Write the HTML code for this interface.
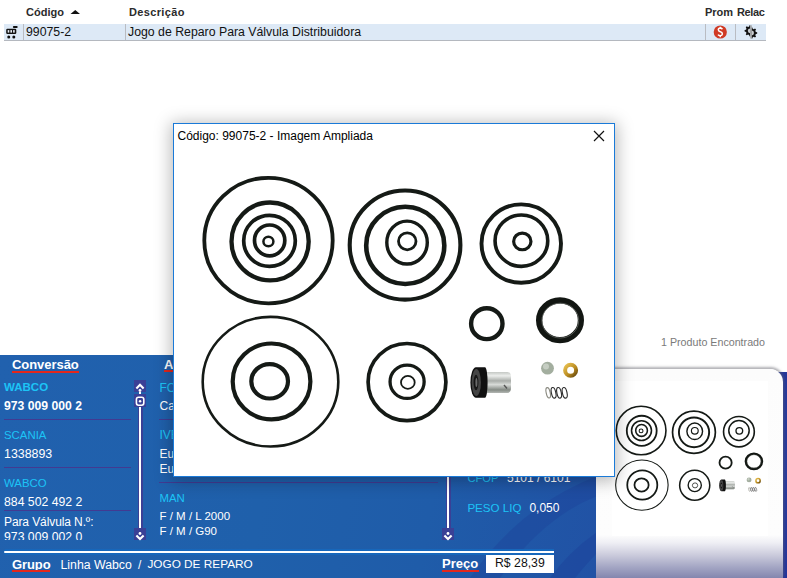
<!DOCTYPE html>
<html><head><meta charset="utf-8">
<style>
*{margin:0;padding:0;box-sizing:border-box}
html,body{width:787px;height:578px;overflow:hidden;background:#fff;font-family:"Liberation Sans",sans-serif;position:relative}
.a{position:absolute;white-space:nowrap}
.row{left:4px;top:24px;width:762px;height:17px;background:#dde9f6;border-bottom:1px solid #b4b8bf}
.vd{width:1px;background:#b9bcc2}
#panel{left:0;top:355px;width:596px;height:223px;background:linear-gradient(100deg,#2161ae 0%,#1f60ab 45%,#1f5ca9 72%,#2152a5 100%);overflow:hidden}
.ul{height:2px;background:#e3271c}
.sep{height:1px;background:#423a92}
.sb{width:12px;height:12px;background:#3a4096}
.trk{width:5px;background:#3a4096}
.trk i{position:absolute;left:1.2px;top:0;bottom:0;width:2.6px;background:#fff}
#dlg{left:173px;top:123px;width:442px;height:354px;background:#fff;border:1px solid #1a7ad8;box-shadow:0 2px 16px 2px rgba(0,0,0,0.28)}
#card{left:596px;top:369px;width:187px;height:209px;border-top-right-radius:13px;box-shadow:0 -1.5px 2.5px 0.5px rgba(100,100,110,.5);background:linear-gradient(180deg,#fcfcfc 0px,#fdfdfd 166px,#eeeef4 174px,#cbcbdc 186px,#a4a6c4 198px,#8486ae 209px)}

</style></head><body>
<div class="a" style="left:26px;top:6.69px;font-size:11px;line-height:11px;font-weight:bold;color:#2b2b2b;">Código</div>
<svg class="a" style="left:70px;top:9px" width="11" height="6"><path d="M0.5 5 L5.25 1 L10 5Z" fill="#111"/></svg>
<div class="a" style="left:129px;top:6.69px;font-size:11px;line-height:11px;font-weight:bold;color:#2b2b2b;letter-spacing:0.35px">Descrição</div>
<div class="a" style="left:705px;top:6.69px;font-size:11px;line-height:11px;font-weight:bold;color:#2b2b2b;">Prom</div>
<div class="a" style="left:737px;top:6.69px;font-size:11px;line-height:11px;font-weight:bold;color:#2b2b2b;letter-spacing:-0.35px">Relac</div>
<div class="a row"></div>
<div class="a vd" style="left:23px;top:24px;height:16px"></div>
<div class="a vd" style="left:125px;top:24px;height:16px"></div>
<div class="a vd" style="left:705px;top:24px;height:16px"></div>
<div class="a vd" style="left:735px;top:24px;height:16px"></div>
<svg class="a" style="left:4px;top:24px" width="19" height="16"><rect x="8.9" y="1.9" width="4.8" height="2" rx="1" fill="#111"/><rect x="2.2" y="4.8" width="10.1" height="5.1" rx="1.2" fill="#111"/><rect x="3.7" y="6.1" width="1.6" height="2.5" fill="#e8eef6"/><rect x="6.4" y="6.1" width="1.6" height="2.5" fill="#e8eef6"/><rect x="9.1" y="6.1" width="1.6" height="2.5" fill="#e8eef6"/><circle cx="4.75" cy="12.9" r="1.5" fill="#111"/><circle cx="9.8" cy="12.9" r="1.5" fill="#111"/></svg>
<svg class="a" style="left:712px;top:24px" width="17" height="16"><circle cx="8.3" cy="8" r="6.6" fill="#d03a25"/><path d="M10.4 5.2 Q9.6 4.1 8.3 4.1 Q6.3 4.2 6.3 5.8 Q6.4 7.3 8.3 7.8 Q10.4 8.4 10.4 10 Q10.2 11.7 8.2 11.7 Q6.8 11.7 6 10.6" stroke="#fff" stroke-width="1.5" fill="none"/><path d="M8.3 2.8v1.4M8.3 11.6v1.6" stroke="#fff" stroke-width="1.3"/></svg>
<svg class="a" style="left:742px;top:24px" width="18" height="16"><path d="M8.20 1.20 L7.47 1.25 L7.09 2.65 L6.55 2.83 L6.05 3.08 L4.79 2.36 L4.24 2.84 L3.76 3.39 L4.48 4.65 L4.23 5.15 L4.05 5.69 L2.65 6.07 L2.60 6.80 L2.65 7.53 L4.05 7.91 L4.23 8.45 L4.48 8.95 L3.76 10.21 L4.24 10.76 L4.79 11.24 L6.05 10.52 L6.55 10.77 L7.09 10.95 L7.47 12.35 L8.20 12.40Z" fill="#111"/><path d="M9.60 14.60 L10.33 14.55 L10.71 13.15 L11.25 12.97 L11.75 12.72 L13.01 13.44 L13.56 12.96 L14.04 12.41 L13.32 11.15 L13.57 10.65 L13.75 10.11 L15.15 9.73 L15.20 9.00 L15.15 8.27 L13.75 7.89 L13.57 7.35 L13.32 6.85 L14.04 5.59 L13.56 5.04 L13.01 4.56 L11.75 5.28 L11.25 5.03 L10.71 4.85 L10.33 3.45 L9.60 3.40Z" fill="#111"/><path d="M8.2 4.4 A2.4 2.4 0 0 0 8.2 9.2Z" fill="#c8ccd0"/><path d="M9.6 6.6 A2.4 2.4 0 0 1 9.6 11.4Z" fill="#c8ccd0"/><rect x="8.3" y="1.3" width="1.4" height="13.2" fill="#999"/></svg>
<div class="a" style="left:26px;top:25.59px;font-size:12.3px;line-height:12.3px;font-weight:normal;color:#111;">99075-2</div>
<div class="a" style="left:128px;top:25.59px;font-size:12.3px;line-height:12.3px;font-weight:normal;color:#111;">Jogo de Reparo Para Válvula Distribuidora</div>
<div class="a" style="left:596px;top:355px;width:191px;height:223px;background:#fff"></div>
<div class="a" style="left:661px;top:337.24px;font-size:10.7px;line-height:10.7px;font-weight:normal;color:#7a7a7a;">1 Produto Encontrado</div>
<div class="a" style="left:776px;top:372px;width:11px;height:206px;background:linear-gradient(180deg,#25389a,#2a3b9c 50%,#23349a)"></div>
<div class="a" id="card"></div>
<div class="a" style="left:612px;top:381px;width:156px;height:155px;background:#fff"></div>
<svg class="a" style="left:0;top:0" width="787" height="578"><g transform="translate(537.2,337.4) scale(0.387)"><ellipse cx="268.5" cy="240.55" rx="64.2" ry="62.75" stroke="#151a16" stroke-width="4.10" fill="none"/><ellipse cx="270.1" cy="241.4" rx="38.6" ry="38.9" stroke="#151a16" stroke-width="4.64" fill="none"/><ellipse cx="269.5" cy="240.85" rx="25.8" ry="25.55" stroke="#151a16" stroke-width="4.00" fill="none"/><ellipse cx="269.65" cy="240.4" rx="15.15" ry="15.4" stroke="#151a16" stroke-width="4.00" fill="none"/><ellipse cx="268.4" cy="241.55" rx="5.0" ry="4.75" stroke="#151a16" stroke-width="2.70" fill="none"/><ellipse cx="405.05" cy="245.05" rx="55.35" ry="54.55" stroke="#151a16" stroke-width="4.43" fill="none"/><ellipse cx="405.25" cy="245.4" rx="39.05" ry="38.6" stroke="#151a16" stroke-width="4.97" fill="none"/><ellipse cx="407.05" cy="242.55" rx="20.25" ry="21.45" stroke="#151a16" stroke-width="3.67" fill="none"/><ellipse cx="407.25" cy="241.3" rx="8.75" ry="8.5" stroke="#151a16" stroke-width="3.02" fill="none"/><ellipse cx="521.25" cy="243.6" rx="39.75" ry="39.2" stroke="#151a16" stroke-width="4.21" fill="none"/><ellipse cx="521.4" cy="240.65" rx="26.35" ry="25.7" stroke="#151a16" stroke-width="3.89" fill="none"/><ellipse cx="522.3" cy="241.4" rx="8.65" ry="8.35" stroke="#151a16" stroke-width="3.46" fill="none"/><ellipse cx="270.5" cy="381.7" rx="67.8" ry="64.85" stroke="#151a16" stroke-width="2.81" fill="none"/><ellipse cx="271.55" cy="381.4" rx="38.85" ry="37.9" stroke="#151a16" stroke-width="4.54" fill="none"/><ellipse cx="269.65" cy="381.3" rx="18.35" ry="17.2" stroke="#151a16" stroke-width="4.54" fill="none"/><ellipse cx="407" cy="382.1" rx="38.9" ry="38.6" stroke="#151a16" stroke-width="4.00" fill="none"/><ellipse cx="407.1" cy="381.75" rx="17.05" ry="16.7" stroke="#151a16" stroke-width="3.56" fill="none"/><ellipse cx="407.85" cy="382.4" rx="6.85" ry="6.45" stroke="#151a16" stroke-width="1.94" fill="none"/><ellipse cx="486.8" cy="323.65" rx="15.7" ry="15.45" stroke="#151a16" stroke-width="4.75" fill="none"/><ellipse cx="560" cy="320.2" rx="20.9" ry="19.9" stroke="#121612" stroke-width="6.20" fill="none"/><ellipse cx="560.3" cy="320.6" rx="18.4" ry="17.4" stroke="#5a5f5a" stroke-width="0.90" fill="none"/><defs><linearGradient id="silb" x1="0" y1="0" x2="0" y2="1"><stop offset="0" stop-color="#c4c8c4"/><stop offset="0.18" stop-color="#eceeec"/><stop offset="0.42" stop-color="#a9ada9"/><stop offset="0.6" stop-color="#d8dbd8"/><stop offset="0.85" stop-color="#848a84"/><stop offset="1" stop-color="#b4b8b4"/></linearGradient><linearGradient id="brsb" x1="0" y1="0" x2="1" y2="1"><stop offset="0" stop-color="#e8c050"/><stop offset="0.6" stop-color="#b88a20"/><stop offset="1" stop-color="#6a4c10"/></linearGradient></defs><path d="M484 372 L507.5 372 Q511 372.5 511 377 L511 388 Q511 392.5 507.5 393 L484 393Z" fill="url(#silb)"/><path d="M504 385 L507 388.5" stroke="#555" stroke-width="1.4"/><path d="M476 367.2 L485 367.2 A2.6 15.3 0 0 1 485 397.8 L476 397.8 A5.6 15.3 0 0 1 476 367.2Z" fill="#101010"/><ellipse cx="476.3" cy="382.5" rx="4.6" ry="13.6" fill="#454545"/><ellipse cx="476" cy="382.5" rx="2.4" ry="7.8" fill="#161616"/><ellipse cx="476.4" cy="382.5" rx="1" ry="4.6" fill="#6a6a6a"/><circle cx="547.5" cy="368.2" r="6.4" fill="#a3ae9f"/><circle cx="546" cy="366.5" r="3" fill="#c5cdc2"/><circle cx="570.6" cy="370.2" r="5.5" stroke="url(#brsb)" stroke-width="4" fill="none"/><g stroke="#2e2e2e" stroke-width="1.15" fill="none"><ellipse cx="548.2" cy="392.8" rx="2" ry="5.3" stroke="#8a8a80" transform="rotate(-12 548.2 392.8)"/><ellipse cx="553.6" cy="392.8" rx="2.2" ry="5.4" transform="rotate(-12 553.6 392.8)"/><ellipse cx="559.1" cy="392.8" rx="2.2" ry="5.4" transform="rotate(-12 559.1 392.8)"/><ellipse cx="564.7" cy="392.8" rx="2.3" ry="5.4" transform="rotate(-12 564.7 392.8)"/></g></g></svg>
<div class="a" id="panel"><svg width="596" height="223" style="position:absolute;left:0;top:0"><path d="M600 120 Q520 150 470 223 L500 223 Q545 160 600 140Z" fill="#1c3f98" opacity="0.35"/><path d="M600 175 Q570 195 550 223 L575 223 Q590 205 600 195Z" fill="#1c3f98" opacity="0.4"/></svg></div>
<div class="a" style="left:12px;top:358.00px;font-size:13px;line-height:13px;font-weight:bold;color:#fff;letter-spacing:-0.05px">Conversão</div>
<div class="a ul" style="left:12px;top:371px;width:67px"></div>
<div class="a" style="left:164px;top:357.50px;font-size:13px;line-height:13px;font-weight:bold;color:#fff;">Aplicação</div>
<div class="a ul" style="left:164px;top:370px;width:62px"></div>
<div class="a" style="left:4px;top:381.77px;font-size:11.5px;line-height:11.5px;font-weight:bold;color:#1cc4f6;">WABCO</div>
<div class="a" style="left:4px;top:399.67px;font-size:12.2px;line-height:12.2px;font-weight:bold;color:#fff;">973 009 000 2</div>
<div class="a sep" style="left:4px;top:419px;width:127px"></div>
<div class="a" style="left:4px;top:430.35px;font-size:11.4px;line-height:11.4px;font-weight:normal;color:#1cc4f6;">SCANIA</div>
<div class="a" style="left:4px;top:447.50px;font-size:12.4px;line-height:12.4px;font-weight:normal;color:#fff;">1338893</div>
<div class="a sep" style="left:4px;top:467px;width:127px"></div>
<div class="a" style="left:4px;top:477.85px;font-size:11.4px;line-height:11.4px;font-weight:normal;color:#1cc4f6;">WABCO</div>
<div class="a" style="left:4px;top:495.63px;font-size:12.25px;line-height:12.25px;font-weight:normal;color:#fff;">884 502 492 2</div>
<div class="a sep" style="left:4px;top:510px;width:127px"></div>
<div class="a" style="left:0;top:512px;width:132px;height:28px;overflow:hidden"><div class="a" style="left:4px;top:3.84px;font-size:12px;line-height:12px;font-weight:normal;color:#fff;letter-spacing:-0.1px">Para Válvula N.º:</div>
<div class="a" style="left:4px;top:18.63px;font-size:12.25px;line-height:12.25px;font-weight:normal;color:#fff;">973 009 002 0</div>
</div>
<div class="a sb" style="left:134px;top:380px"><svg width="12" height="12"><path d="M2.4 6.4 L6 2.8 L9.6 6.4" stroke="#fff" stroke-width="2.1" fill="none"/><circle cx="6" cy="8.5" r="1.4" fill="#fff"/></svg></div>
<div class="a" style="left:139px;top:392px;width:2px;height:2px;background:#fff"></div>
<div class="a sb" style="left:134px;top:394px;height:13px"><svg width="12" height="13"><rect x="2.4" y="2.3" width="7.4" height="8" rx="2.2" stroke="#fff" stroke-width="1.6" fill="none"/><circle cx="6.1" cy="6.3" r="1.2" fill="#fff"/></svg></div>
<div class="a trk" style="left:137.5px;top:407px;height:121px"><i></i></div>
<div class="a sb" style="left:134px;top:528px"><svg width="12" height="12"><path d="M2.4 5.4 L6 9.0 L9.6 5.4" stroke="#fff" stroke-width="2.1" fill="none"/><circle cx="6" cy="3.5" r="1.4" fill="#fff"/></svg></div>
<div class="a trk" style="left:445.5px;top:477px;height:51px"><i></i></div>
<div class="a sb" style="left:442px;top:528px"><svg width="12" height="12"><path d="M2.4 5.4 L6 9.0 L9.6 5.4" stroke="#fff" stroke-width="2.1" fill="none"/><circle cx="6" cy="3.5" r="1.4" fill="#fff"/></svg></div>
<div class="a" style="left:159.5px;top:381.84px;font-size:12px;line-height:12px;font-weight:normal;color:#1cc4f6;">FORD</div>
<div class="a" style="left:159.5px;top:399.84px;font-size:12px;line-height:12px;font-weight:normal;color:#fff;">Cargo</div>
<div class="a sep" style="left:159px;top:419px;width:279px"></div>
<div class="a" style="left:159.5px;top:429.34px;font-size:12px;line-height:12px;font-weight:normal;color:#1cc4f6;">IVECO</div>
<div class="a" style="left:159.5px;top:448.34px;font-size:12px;line-height:12px;font-weight:normal;color:#fff;">EuroCargo</div>
<div class="a" style="left:159.5px;top:462.84px;font-size:12px;line-height:12px;font-weight:normal;color:#fff;">EuroTech</div>
<div class="a sep" style="left:159px;top:482px;width:279px"></div>
<div class="a" style="left:159.5px;top:493.35px;font-size:11.4px;line-height:11.4px;font-weight:normal;color:#1cc4f6;">MAN</div>
<div class="a" style="left:159.5px;top:511.27px;font-size:11.5px;line-height:11.5px;font-weight:normal;color:#fff;">F / M / L 2000</div>
<div class="a" style="left:159.5px;top:526.27px;font-size:11.5px;line-height:11.5px;font-weight:normal;color:#fff;">F / M / G90</div>
<div class="a" style="left:467.4px;top:473.02px;font-size:11.2px;line-height:11.2px;font-weight:normal;color:#1cc4f6;">CFOP</div>
<div class="a" style="left:507px;top:472.34px;font-size:12px;line-height:12px;font-weight:normal;color:#fff;">5101 / 6101</div>
<div class="a" style="left:467.4px;top:502.18px;font-size:11.6px;line-height:11.6px;font-weight:normal;color:#1cc4f6;">PESO LIQ</div>
<div class="a" style="left:529.4px;top:501.84px;font-size:12px;line-height:12px;font-weight:normal;color:#fff;">0,050</div>
<div class="a" style="left:4px;top:549px;width:550px;height:6px;background:#1767bb;border-radius:2px 0 0 2px"></div>
<div class="a" style="left:4px;top:551px;width:550px;height:2px;background:#fff;border-radius:1px 0 0 1px"></div>
<div class="a" style="left:12px;top:557.50px;font-size:13px;line-height:13px;font-weight:bold;color:#fff;letter-spacing:-0.1px">Grupo</div>
<div class="a ul" style="left:12px;top:570px;width:38px"></div>
<div class="a" style="left:60.5px;top:558.79px;font-size:12.3px;line-height:12.3px;font-weight:normal;color:#fff;">Linha Wabco</div>
<div class="a" style="left:138px;top:559.04px;font-size:12px;line-height:12px;font-weight:normal;color:#fff;">/</div>
<div class="a" style="left:147.4px;top:559.21px;font-size:11.8px;line-height:11.8px;font-weight:normal;color:#fff;">JOGO DE REPARO</div>
<div class="a" style="left:442px;top:556.50px;font-size:13px;line-height:13px;font-weight:bold;color:#fff;">Preço</div>
<div class="a ul" style="left:442px;top:570px;width:37px"></div>
<div class="a" style="left:486px;top:555px;width:68px;height:18px;background:#fff"></div>
<div class="a" style="left:495px;top:556.63px;font-size:12.25px;line-height:12.25px;font-weight:normal;color:#111;">R$ 28,39</div>
<div class="a" id="dlg"></div>
<div class="a" style="left:177.5px;top:129.84px;font-size:12px;line-height:12px;font-weight:normal;color:#000;">Código: 99075-2 - Imagem Ampliada</div>
<svg class="a" style="left:593px;top:130px" width="12" height="12"><path d="M1 1 L11 11 M11 1 L1 11" stroke="#111" stroke-width="1.2"/></svg>
<svg class="a" style="left:0;top:0" width="787" height="578"><clipPath id="dc"><rect x="174" y="124" width="440" height="352"/></clipPath><g clip-path="url(#dc)"><ellipse cx="268.5" cy="240.55" rx="64.2" ry="62.75" stroke="#151a16" stroke-width="3.80" fill="none"/><ellipse cx="270.1" cy="241.4" rx="38.6" ry="38.9" stroke="#151a16" stroke-width="4.30" fill="none"/><ellipse cx="269.5" cy="240.85" rx="25.8" ry="25.55" stroke="#151a16" stroke-width="3.70" fill="none"/><ellipse cx="269.65" cy="240.4" rx="15.15" ry="15.4" stroke="#151a16" stroke-width="3.70" fill="none"/><ellipse cx="268.4" cy="241.55" rx="5.0" ry="4.75" stroke="#151a16" stroke-width="2.50" fill="none"/><ellipse cx="405.05" cy="245.05" rx="55.35" ry="54.55" stroke="#151a16" stroke-width="4.10" fill="none"/><ellipse cx="405.25" cy="245.4" rx="39.05" ry="38.6" stroke="#151a16" stroke-width="4.60" fill="none"/><ellipse cx="407.05" cy="242.55" rx="20.25" ry="21.45" stroke="#151a16" stroke-width="3.40" fill="none"/><ellipse cx="407.25" cy="241.3" rx="8.75" ry="8.5" stroke="#151a16" stroke-width="2.80" fill="none"/><ellipse cx="521.25" cy="243.6" rx="39.75" ry="39.2" stroke="#151a16" stroke-width="3.90" fill="none"/><ellipse cx="521.4" cy="240.65" rx="26.35" ry="25.7" stroke="#151a16" stroke-width="3.60" fill="none"/><ellipse cx="522.3" cy="241.4" rx="8.65" ry="8.35" stroke="#151a16" stroke-width="3.20" fill="none"/><ellipse cx="270.5" cy="381.7" rx="67.8" ry="64.85" stroke="#151a16" stroke-width="2.60" fill="none"/><ellipse cx="271.55" cy="381.4" rx="38.85" ry="37.9" stroke="#151a16" stroke-width="4.20" fill="none"/><ellipse cx="269.65" cy="381.3" rx="18.35" ry="17.2" stroke="#151a16" stroke-width="4.20" fill="none"/><ellipse cx="407" cy="382.1" rx="38.9" ry="38.6" stroke="#151a16" stroke-width="3.70" fill="none"/><ellipse cx="407.1" cy="381.75" rx="17.05" ry="16.7" stroke="#151a16" stroke-width="3.30" fill="none"/><ellipse cx="407.85" cy="382.4" rx="6.85" ry="6.45" stroke="#151a16" stroke-width="1.80" fill="none"/><ellipse cx="486.8" cy="323.65" rx="15.7" ry="15.45" stroke="#151a16" stroke-width="4.40" fill="none"/><ellipse cx="560" cy="320.2" rx="20.9" ry="19.9" stroke="#121612" stroke-width="6.20" fill="none"/><ellipse cx="560.3" cy="320.6" rx="18.4" ry="17.4" stroke="#5a5f5a" stroke-width="0.90" fill="none"/><defs><linearGradient id="sila" x1="0" y1="0" x2="0" y2="1"><stop offset="0" stop-color="#c4c8c4"/><stop offset="0.18" stop-color="#eceeec"/><stop offset="0.42" stop-color="#a9ada9"/><stop offset="0.6" stop-color="#d8dbd8"/><stop offset="0.85" stop-color="#848a84"/><stop offset="1" stop-color="#b4b8b4"/></linearGradient><linearGradient id="brsa" x1="0" y1="0" x2="1" y2="1"><stop offset="0" stop-color="#e8c050"/><stop offset="0.6" stop-color="#b88a20"/><stop offset="1" stop-color="#6a4c10"/></linearGradient></defs><path d="M484 372 L507.5 372 Q511 372.5 511 377 L511 388 Q511 392.5 507.5 393 L484 393Z" fill="url(#sila)"/><path d="M504 385 L507 388.5" stroke="#555" stroke-width="1.4"/><path d="M476 367.2 L485 367.2 A2.6 15.3 0 0 1 485 397.8 L476 397.8 A5.6 15.3 0 0 1 476 367.2Z" fill="#101010"/><ellipse cx="476.3" cy="382.5" rx="4.6" ry="13.6" fill="#454545"/><ellipse cx="476" cy="382.5" rx="2.4" ry="7.8" fill="#161616"/><ellipse cx="476.4" cy="382.5" rx="1" ry="4.6" fill="#6a6a6a"/><circle cx="547.5" cy="368.2" r="6.4" fill="#a3ae9f"/><circle cx="546" cy="366.5" r="3" fill="#c5cdc2"/><circle cx="570.6" cy="370.2" r="5.5" stroke="url(#brsa)" stroke-width="4" fill="none"/><g stroke="#2e2e2e" stroke-width="1.15" fill="none"><ellipse cx="548.2" cy="392.8" rx="2" ry="5.3" stroke="#8a8a80" transform="rotate(-12 548.2 392.8)"/><ellipse cx="553.6" cy="392.8" rx="2.2" ry="5.4" transform="rotate(-12 553.6 392.8)"/><ellipse cx="559.1" cy="392.8" rx="2.2" ry="5.4" transform="rotate(-12 559.1 392.8)"/><ellipse cx="564.7" cy="392.8" rx="2.3" ry="5.4" transform="rotate(-12 564.7 392.8)"/></g></g></svg>
</body></html>
